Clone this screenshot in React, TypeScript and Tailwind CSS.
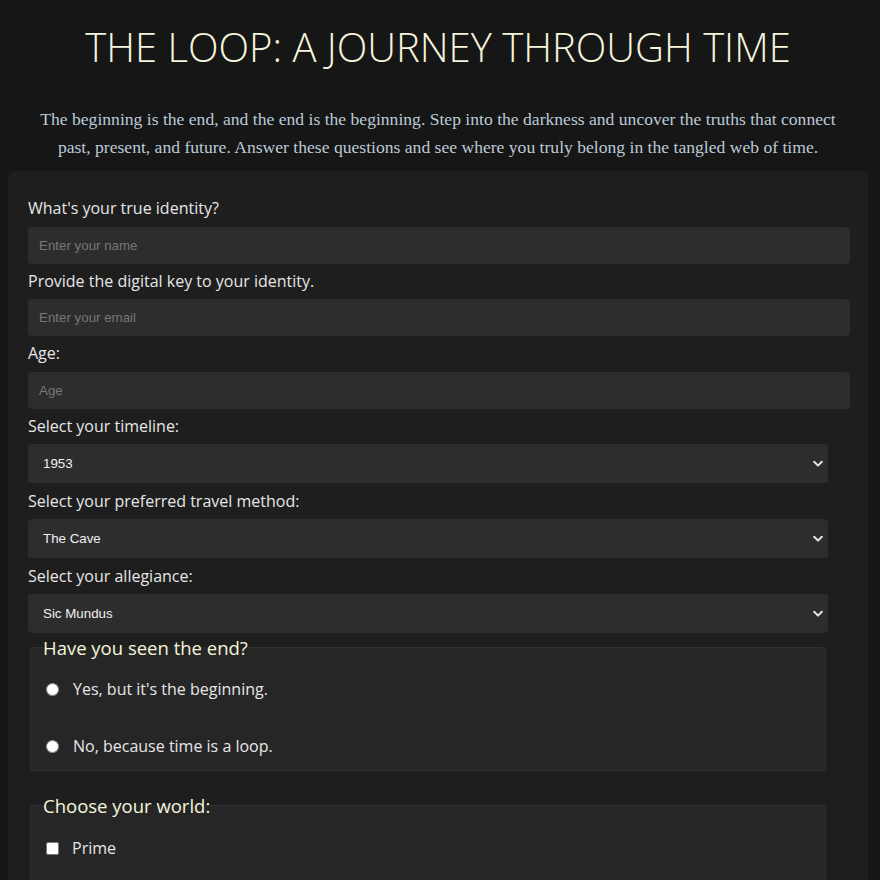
import React from "react";

const Chevron = () => (
  <svg
    className="pointer-events-none absolute right-[5px] top-1/2 -translate-y-1/2"
    width="10"
    height="7"
    viewBox="0 0 10 7"
    fill="none"
  >
    <path d="M1.2 1.3 L5 5.1 L8.8 1.3" stroke="#e6e6e6" strokeWidth="2" strokeLinecap="round" strokeLinejoin="round" />
  </svg>
);

function TextField({ label, placeholder, type = "text" }: { label: string; placeholder: string; type?: string }) {
  return (
    <div className="flex flex-col">
      <label className="mb-[7.5px] block text-[16px] leading-[22px] text-[#e6e6e6]">{label}</label>
      <input
        type={type}
        placeholder={placeholder}
        className="mb-[6px] h-[37px] w-[822px] rounded-[4px] bg-[#2d2d2d] px-[11px] text-[13.33px] text-[#e6e6e6] outline-none placeholder:text-[#767676]"
        style={{ fontFamily: '"Liberation Sans", Arial, sans-serif' }}
      />
    </div>
  );
}

function SelectField({ label, options }: { label: string; options: string[] }) {
  return (
    <div className="flex flex-col">
      <label className="mb-[7.5px] block text-[16px] leading-[22px] text-[#e6e6e6]">{label}</label>
      <div className="relative mb-[6.5px] w-[800px]">
        <select
          className="h-[39px] w-full appearance-none rounded-[4px] bg-[#2d2d2d] pl-[15px] text-[13.33px] text-[#f0f0f0] outline-none"
          style={{ fontFamily: '"Liberation Sans", Arial, sans-serif' }}
          defaultValue={options[0]}
        >
          {options.map((o) => (
            <option key={o}>{o}</option>
          ))}
        </select>
        <Chevron />
      </div>
    </div>
  );
}

export default function App() {
  return (
    <div
      className="min-h-screen bg-[#161616] pb-10 pl-2 pr-3"
      style={{ fontFamily: '"Open Sans", "Noto Sans", sans-serif' }}
    >
      <h1 className="pt-[20px] text-center text-[40px] font-light leading-[54px] text-[#f5f5dc]">
        THE LOOP: A JOURNEY THROUGH TIME
      </h1>
      <p
        className="mx-auto mt-[31px] max-w-[800px] text-center text-[17.6px] leading-[28px] text-[#bccad6]"
        style={{ fontFamily: '"Liberation Serif", "Times New Roman", serif' }}
      >
        The beginning is the end, and the end is the beginning. Step into the darkness and uncover the truths that connect
        past, present, and future. Answer these questions and see where you truly belong in the tangled web of time.
      </p>
      <form className="mt-[10px] rounded-lg bg-[#1e1e1e] px-5 pb-6 pt-[26px]">
        <TextField label="What's your true identity?" placeholder="Enter your name" />
        <TextField label="Provide the digital key to your identity." placeholder="Enter your email" type="email" />
        <TextField label="Age:" placeholder="Age" type="number" />
        <SelectField label="Select your timeline:" options={["1953", "1986", "2019", "2052"]} />
        <SelectField label="Select your preferred travel method:" options={["The Cave", "The Time Machine", "The Passage"]} />
        <SelectField label="Select your allegiance:" options={["Sic Mundus", "Erit Lux", "The Travelers"]} />

        <fieldset className="mx-[2px] -mt-[5.5px] w-[796px] rounded-[4px] border border-[#303030] bg-[#262626] px-3 pb-[13px]">
          <legend className="text-[18.5px] leading-[27px] text-[#f5f5dc]">Have you seen the end?</legend>
          <div className="flex flex-col gap-[35px] pt-[17px]">
            <label className="flex h-[22px] items-center text-[16px] text-[#e6e6e6]">
              <input type="radio" name="end" className="ml-[3px] mr-[14px] h-[13px] w-[13px]" />
              Yes, but it's the beginning.
            </label>
            <label className="flex h-[22px] items-center text-[16px] text-[#e6e6e6]">
              <input type="radio" name="end" className="ml-[3px] mr-[14px] h-[13px] w-[13px]" />
              No, because time is a loop.
            </label>
          </div>
        </fieldset>

        <fieldset className="mx-[2px] mt-[21px] w-[796px] rounded-[4px] border border-[#303030] bg-[#262626] px-3 pb-[13px]">
          <legend className="text-[18.5px] leading-[27px] text-[#f5f5dc]">Choose your world:</legend>
          <div className="flex flex-col gap-[35px] pt-[18px]">
            <label className="flex h-[22px] items-center text-[16px] text-[#e6e6e6]">
              <input type="checkbox" className="ml-[3px] mr-[13px] h-[13px] w-[13px]" />
              Prime
            </label>
            <label className="flex h-[22px] items-center text-[16px] text-[#e6e6e6]">
              <input type="checkbox" className="ml-[3px] mr-[13px] h-[13px] w-[13px]" />
              Origin
            </label>
          </div>
        </fieldset>
      </form>
    </div>
  );
}
